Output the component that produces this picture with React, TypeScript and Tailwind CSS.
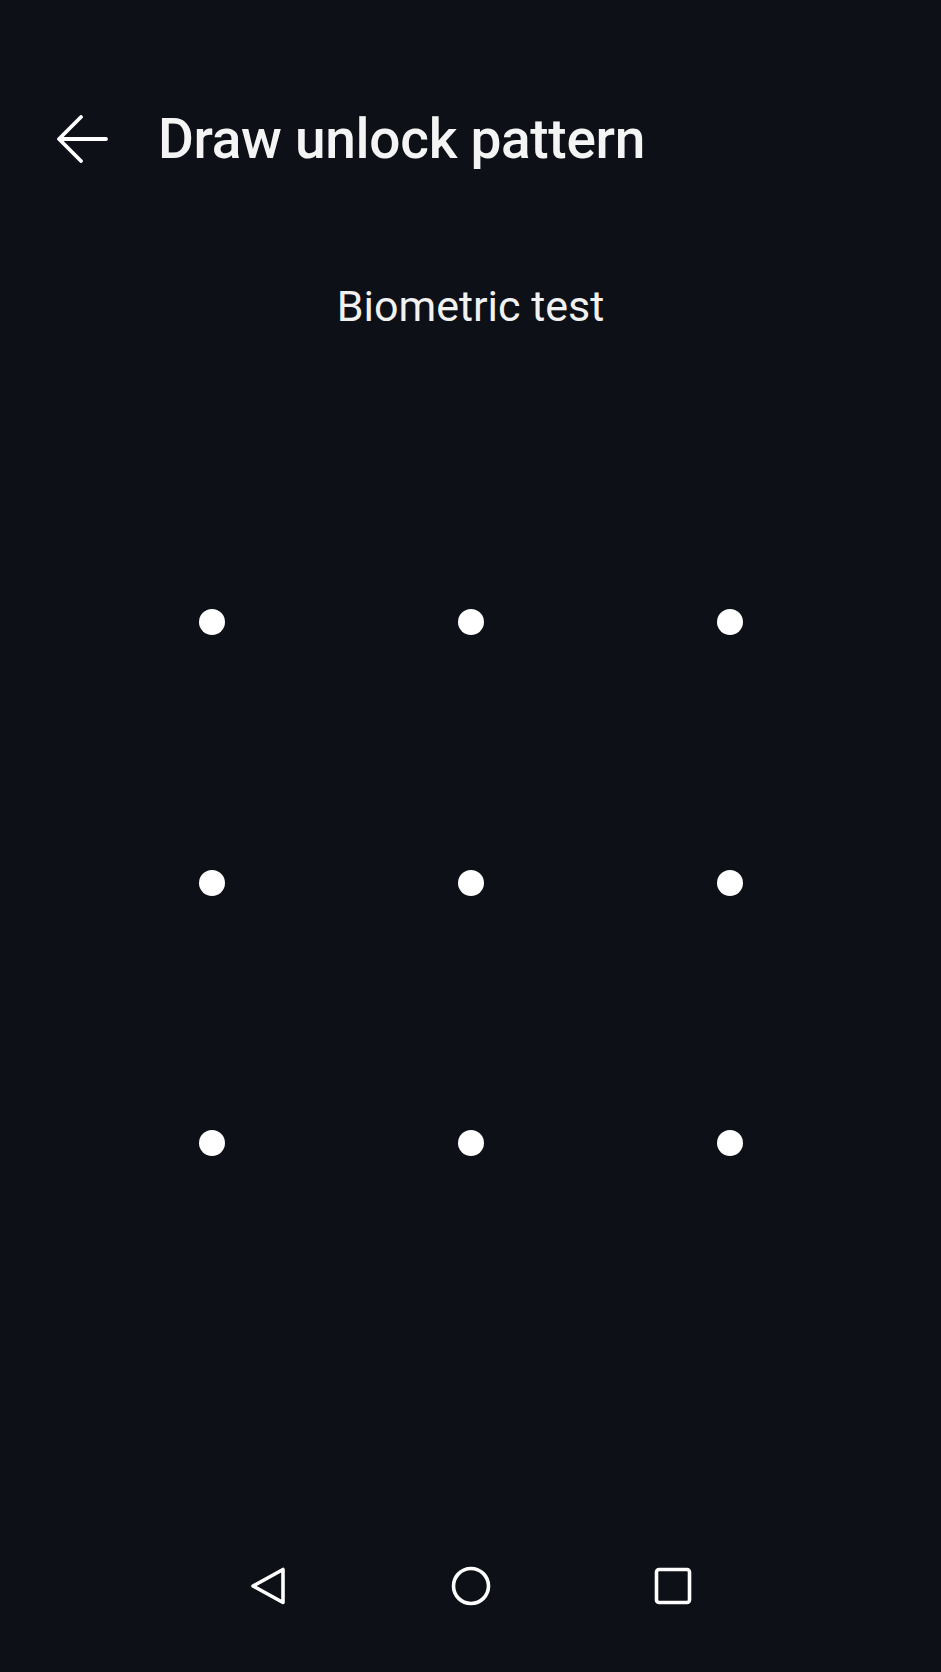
const dots = Array.from({ length: 9 }, (_, i) => i);

const App = () => {
  return (
    <div
      className="w-[941px] h-[1672px] bg-[#0d1016] text-white flex flex-col"
      style={{ fontFamily: "Roboto, 'Noto Sans', sans-serif" }}
    >
      {/* Top bar */}
      <div className="mt-[107px] h-[64px] flex items-center">
        <div className="ml-[55px] w-[54px] h-[54px] flex items-center justify-center">
          <svg width="52" height="48" viewBox="0 0 52 48" fill="none">
            <path
              d="M50 24H4M25 2L3 24L25 46"
              stroke="#ffffff"
              strokeWidth="3.8"
              strokeLinecap="round"
              strokeLinejoin="round"
            />
          </svg>
        </div>
        <h1 className="ml-[49px] text-[55px] font-medium tracking-[-0.3px] leading-none text-[#f4f4f5]">
          Draw unlock pattern
        </h1>
      </div>

      {/* Subtitle */}
      <p className="mt-[110px] text-center text-[43px] leading-[50px] text-[#f1f1f2]">
        Biometric test
      </p>

      {/* Pattern grid */}
      <div className="mt-[161px] mx-auto grid grid-cols-3 w-[777px]">
        {dots.map((d) => (
          <div key={d} className="h-[260.5px] flex items-center justify-center">
            <div className="w-[26px] h-[26px] rounded-full bg-white" />
          </div>
        ))}
      </div>

      {/* Navigation bar */}
      <div className="mt-auto mb-[50px] h-[72px] flex items-center justify-center">
        <div className="w-[72px] flex justify-center">
          <svg width="40" height="40" viewBox="0 0 40 40" fill="none">
            <path
              d="M34 3.5V36.5L4 20Z"
              stroke="#ffffff"
              strokeWidth="3.6"
              strokeLinejoin="round"
            />
          </svg>
        </div>
        <div className="w-[72px] flex justify-center ml-[130px]">
          <svg width="40" height="40" viewBox="0 0 40 40" fill="none">
            <circle cx="20" cy="20" r="17.5" stroke="#ffffff" strokeWidth="3.6" />
          </svg>
        </div>
        <div className="w-[72px] flex justify-center ml-[130px]">
          <svg width="40" height="40" viewBox="0 0 40 40" fill="none">
            <rect x="3.5" y="3.5" width="33" height="33" rx="2.5" stroke="#ffffff" strokeWidth="3.6" />
          </svg>
        </div>
      </div>
    </div>
  );
};

export default App;
